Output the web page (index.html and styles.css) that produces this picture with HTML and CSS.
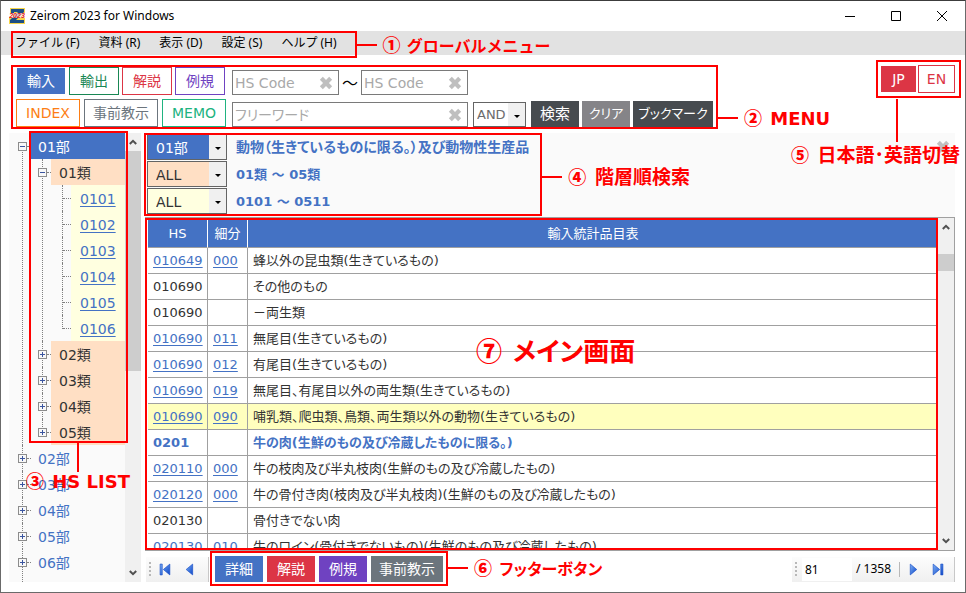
FILE: index.html
```html
<!DOCTYPE html>
<html lang="ja">
<head>
<meta charset="utf-8">
<title>Zeirom 2023 for Windows</title>
<link rel="stylesheet" href="styles.css">
</head>
<body>
<svg class="defs" aria-hidden="true">
  <symbol id="x" viewBox="0 0 12 12"><path d="M2 2l8 8M10 2l-8 8" stroke="currentColor" stroke-width="3.6" fill="none"/></symbol>
  <symbol id="up" viewBox="0 0 8 6"><path d="M.8 5L4 1.8 7.200 5" stroke="#505050" stroke-width="2" fill="none"/></symbol>
  <symbol id="down" viewBox="0 0 8 6"><path d="M.8 1L4 4.200 7.200 1" stroke="#505050" stroke-width="2" fill="none"/></symbol>
  <linearGradient id="blue" x1="0" x2="1" y1="0" y2="1"><stop offset="0" stop-color="#7db0f5"/><stop offset="1" stop-color="#0b45c8"/></linearGradient>
</svg>
<div class="window">
  <header class="titlebar">
    <svg class="logo" viewBox="0 0 16 16" aria-hidden="true">
      <path d="M1 0h15v5l-2 2v2h2v7H0V10h2L3 6H1z" fill="#f6d54a"/>
      <path d="M2 1h13v3L7 12h8v3H1v-3l8-8H5v2H2z" fill="#1d4f86"/>
      <path d="M0 5h16v5H0z" fill="#fff" opacity=".75"/>
      <text x="8" y="10" text-anchor="middle">2023</text>
    </svg>
    <h1>Zeirom 2023 for Windows</h1>
    <div class="window-buttons">
      <button type="button" aria-label="最小化"><svg viewBox="0 0 10 10"><path d="M0 5.500h10"/></svg></button>
      <button type="button" aria-label="最大化"><svg viewBox="0 0 10 10"><path d="M.5.5h9v9h-9z"/></svg></button>
      <button type="button" aria-label="閉じる"><svg viewBox="0 0 10 10"><path d="M0 0l10 10M10 0L0 10"/></svg></button>
    </div>
  </header>

  <div class="menubar">
    <nav class="menu marked">
      <button type="button">ファイル (F)</button>
      <button type="button">資料 (R)</button>
      <button type="button">表示 (D)</button>
      <button type="button">設定 (S)</button>
      <button type="button">ヘルプ (H)</button>
      <div class="frame"></div>
      <div class="callout side kana"><b>①</b> グローバルメニュー</div>
    </nav>
  </div>

  <div class="tools">
    <div class="search marked">
      <div class="modes">
        <div class="line">
          <button type="button" class="btn solid-blue">輸入</button>
          <button type="button" class="btn green">輸出</button>
          <button type="button" class="btn red">解説</button>
          <button type="button" class="btn purple">例規</button>
        </div>
        <div class="line">
          <button type="button" class="btn wide orange">INDEX</button>
          <button type="button" class="btn wider gray">事前教示</button>
          <button type="button" class="btn wide teal">MEMO</button>
        </div>
      </div>
      <form class="fields">
        <div class="line range">
          <div class="field"><input type="text" placeholder="HS Code" aria-label="HS Code 開始"><button type="button" aria-label="消去"><svg><use href="#x"/></svg></button></div>
          <span class="tilde">～</span>
          <div class="field"><input type="text" placeholder="HS Code" aria-label="HS Code 終了"><button type="button" aria-label="消去"><svg><use href="#x"/></svg></button></div>
        </div>
        <div class="line">
          <div class="field free"><input type="text" placeholder="フリーワード" aria-label="フリーワード"><button type="button" aria-label="消去"><svg><use href="#x"/></svg></button></div>
          <div class="pick and"><select aria-label="条件"><option>AND</option><option>OR</option></select></div>
          <div class="actions">
            <button type="submit" class="act">検索</button>
            <button type="reset" class="act light">クリア</button>
            <button type="button" class="act long">ブックマーク</button>
          </div>
        </div>
      </form>
      <div class="frame"></div>
      <div class="callout side"><b>②</b> MENU</div>
    </div>
    <div class="language marked">
      <button type="button" class="btn solid-red">JP</button>
      <button type="button" class="btn red">EN</button>
      <div class="frame"></div>
      <div class="callout below kanji"><b>⑤</b> 日本語･英語切替</div>
    </div>
  </div>

  <div class="work">
    <aside class="sidebar">
      <ul class="tree">
        <li class="part open marked">
          <div class="node"><button type="button" class="toggle minus" aria-label="閉じる"></button><span class="label current">01部</span></div>
          <ul>
            <li class="chapter open">
              <div class="node"><button type="button" class="toggle minus" aria-label="閉じる"></button><span class="label">01類</span></div>
              <ul>
                <li class="heading"><a href="#h0101">0101</a></li>
                <li class="heading"><a href="#h0102">0102</a></li>
                <li class="heading"><a href="#h0103">0103</a></li>
                <li class="heading"><a href="#h0104">0104</a></li>
                <li class="heading"><a href="#h0105">0105</a></li>
                <li class="heading"><a href="#h0106">0106</a></li>
              </ul>
            </li>
            <li class="chapter"><div class="node"><button type="button" class="toggle" aria-label="開く"></button><span class="label">02類</span></div></li>
            <li class="chapter"><div class="node"><button type="button" class="toggle" aria-label="開く"></button><span class="label">03類</span></div></li>
            <li class="chapter"><div class="node"><button type="button" class="toggle" aria-label="開く"></button><span class="label">04類</span></div></li>
            <li class="chapter"><div class="node"><button type="button" class="toggle" aria-label="開く"></button><span class="label">05類</span></div></li>
          </ul>
          <div class="frame"></div>
          <div class="callout below"><b>③</b> HS LIST</div>
        </li>
        <li class="part"><div class="node"><button type="button" class="toggle" aria-label="開く"></button><span class="label">02部</span></div></li>
        <li class="part"><div class="node"><button type="button" class="toggle" aria-label="開く"></button><span class="label">03部</span></div></li>
        <li class="part"><div class="node"><button type="button" class="toggle" aria-label="開く"></button><span class="label">04部</span></div></li>
        <li class="part"><div class="node"><button type="button" class="toggle" aria-label="開く"></button><span class="label">05部</span></div></li>
        <li class="part"><div class="node"><button type="button" class="toggle" aria-label="開く"></button><span class="label">06部</span></div></li>
      </ul>
      <div class="scrollbar"><svg><use href="#up"/></svg><div class="track"><div class="thumb"></div></div><svg><use href="#down"/></svg></div>
    </aside>

    <main class="content">
      <section class="levels">
        <div class="level-list marked">
          <div class="level"><div class="pick blue"><select aria-label="部"><option>01部</option></select></div><span class="name">動物（生きているものに限る。）及び動物性生産品</span></div>
          <div class="level"><div class="pick peach"><select aria-label="類"><option>ALL</option></select></div><span>01類 ～ 05類</span></div>
          <div class="level"><div class="pick cream"><select aria-label="項"><option>ALL</option></select></div><span>0101 ～ 0511</span></div>
          <div class="frame"></div>
          <div class="callout side kanji"><b>④</b> 階層順検索</div>
        </div>
        <button type="button" class="dismiss" aria-label="閉じる"><svg><use href="#x"/></svg></button>
      </section>

      <section class="grid marked">
        <div class="viewport">
          <table>
            <colgroup><col class="c-hs"><col class="c-sub"><col></colgroup>
            <thead><tr><th>HS</th><th>細分</th><th>輸入統計品目表</th></tr></thead>
            <tbody>
              <tr><td><a href="#r1">010649</a></td><td><a href="#r1">000</a></td><td>蜂以外の昆虫類(生きているもの)</td></tr>
              <tr><td>010690</td><td></td><td>その他のもの</td></tr>
              <tr><td>010690</td><td></td><td>－両生類</td></tr>
              <tr><td><a href="#r4">010690</a></td><td><a href="#r4">011</a></td><td>無尾目(生きているもの)</td></tr>
              <tr><td><a href="#r5">010690</a></td><td><a href="#r5">012</a></td><td>有尾目(生きているもの)</td></tr>
              <tr><td><a href="#r6">010690</a></td><td><a href="#r6">019</a></td><td>無尾目、有尾目以外の両生類(生きているもの)</td></tr>
              <tr class="selected"><td><a href="#r7">010690</a></td><td><a href="#r7">090</a></td><td>哺乳類、爬虫類、鳥類、両生類以外の動物(生きているもの)</td></tr>
              <tr class="group"><td>0201</td><td></td><td>牛の肉(生鮮のもの及び冷蔵したものに限る。)</td></tr>
              <tr><td><a href="#r9">020110</a></td><td><a href="#r9">000</a></td><td>牛の枝肉及び半丸枝肉(生鮮のもの及び冷蔵したもの)</td></tr>
              <tr><td><a href="#r10">020120</a></td><td><a href="#r10">000</a></td><td>牛の骨付き肉(枝肉及び半丸枝肉)(生鮮のもの及び冷蔵したもの)</td></tr>
              <tr><td>020130</td><td></td><td>骨付きでない肉</td></tr>
              <tr><td><a href="#r12">020130</a></td><td><a href="#r12">010</a></td><td>牛のロイン(骨付きでないもの)(生鮮のもの及び冷蔵したもの)</td></tr>
            </tbody>
          </table>
        </div>
        <div class="scrollbar"><svg><use href="#up"/></svg><div class="track"><div class="thumb"></div></div><svg><use href="#down"/></svg></div>
        <div class="frame"></div>
        <div class="callout center"><b>⑦</b> メイン画面</div>
      </section>

      <footer class="bottom">
        <div class="pager left">
          <i class="grip"></i>
          <button type="button" aria-label="最初"><svg viewBox="0 0 12 12"><path d="M1 1h2v10H1zM10 1v10L4 6z" fill="url(#blue)" stroke="#1c50c8" stroke-width=".6"/></svg></button>
          <button type="button" aria-label="前へ"><svg viewBox="0 0 12 12"><path d="M8 1v10L2 6z" fill="url(#blue)" stroke="#1c50c8" stroke-width=".6"/></svg></button>
        </div>
        <div class="footer-buttons marked">
          <button type="button" class="btn solid-blue">詳細</button>
          <button type="button" class="btn solid-red">解説</button>
          <button type="button" class="btn solid-purple">例規</button>
          <button type="button" class="btn solid-gray wider">事前教示</button>
          <div class="frame"></div>
          <div class="callout side kana"><b>⑥</b> フッターボタン</div>
        </div>
        <div class="pager right">
          <i class="grip"></i>
          <input type="text" value="81" aria-label="ページ">
          <span class="total">/ 1358</span>
          <i class="divider"></i>
          <button type="button" aria-label="次へ"><svg viewBox="0 0 12 12"><path d="M3 1v10l6-5z" fill="url(#blue)" stroke="#1c50c8" stroke-width=".6"/></svg></button>
          <button type="button" aria-label="最後"><svg viewBox="0 0 12 12"><path d="M9 1h2v10H9zM2 1v10l6-5z" fill="url(#blue)" stroke="#1c50c8" stroke-width=".6"/></svg></button>
        </div>
      </footer>
    </main>
  </div>
</div>
</body>
</html>
```
FILE: styles.css
```css
:root {
  --blue: #4472c4;
  --crimson: #dc3545;
  --purple: #6f42c1;
  --gray: #6c757d;
  --line: #a0a0a0;
  --mark: #f00;
}

* { box-sizing: border-box; }

body {
  margin: 0;
  font: 14px/20px "DejaVu Sans", "Noto Sans CJK JP", sans-serif;
  font-feature-settings: "palt";
  color: #333;
  background: #fff;
}

button, input, select {
  font: inherit;
  font-feature-settings: inherit;
  color: inherit;
  margin: 0;
  padding: 0;
  border: 0;
  border-radius: 0;
  background: none;
  white-space: nowrap;
}

ul { list-style: none; margin: 0; padding: 0; }
a { color: var(--blue); text-underline-offset: 2px; }
.defs { position: absolute; width: 0; height: 0; }

.window {
  display: flex;
  flex-direction: column;
  min-height: 100vh;
  border: 1px solid #6a6a6a;
  border-top-color: #3c3c3c;
}

/* Title bar */
.titlebar {
  display: flex;
  align-items: center;
  height: 30px;
  padding-left: 8px;
  gap: 5px;
  color: #000;
}
.logo { width: 16px; height: 16px; }
.logo text { font: italic bold 7px "Liberation Sans", sans-serif; fill: #e01818; }
.titlebar h1 { margin: 0; font: 12px/20px "Noto Sans", "Noto Sans CJK JP", sans-serif; }
.window-buttons { display: flex; margin-left: auto; }
.window-buttons button { width: 46px; height: 30px; }
.window-buttons svg { width: 10px; height: 10px; fill: none; stroke: #000; }

/* Menu bar */
.menubar { display: flex; height: 24px; background: #e2e2e2; padding-left: 14px; }
.menu { display: flex; gap: 19px; padding-right: 20px; font: 12px/24px "Noto Sans", "Noto Sans CJK JP", sans-serif; color: #000; }

/* Search tools */
.tools { display: flex; justify-content: space-between; align-items: flex-start; padding: 12px 10px 4px 15px; }
.search { display: flex; gap: 6px; }
.modes, .fields { display: flex; flex-direction: column; gap: 4px; }
.line { display: flex; gap: 3px; height: 28px; align-items: stretch; }
.modes .line + .line { gap: 4px; }
.fields .line { align-items: flex-end; gap: 5px; }
.btn { width: 50px; height: 28px; border: 1px solid currentColor; text-align: center; }
.wide { width: 64px; }
.wider { width: 74px; }
.green { color: #198754; }
.red { color: var(--crimson); }
.purple { color: var(--purple); }
.orange { color: #fd7e14; }
.gray { color: var(--gray); }
.teal { color: #20b380; }
.solid-blue, .solid-red, .solid-purple, .solid-gray { color: #fff; border-color: #fff; background-clip: padding-box; }
.solid-blue { background-color: var(--blue); }
.solid-red { background-color: var(--crimson); }
.solid-purple { background-color: var(--purple); }
.solid-gray { background-color: var(--gray); }

.field { display: flex; align-items: center; width: 107px; height: 25px; border: 1px solid #7a7a7a; padding: 0 5px 0 2px; }
.free { width: 236px; }
.field input { flex: 1; min-width: 0; height: 23px; outline: 0; }
.field input::placeholder { color: #a9a9a9; opacity: 1; }
.field button, .dismiss { display: flex; color: #bfbfbf; }
.field svg, .dismiss svg { width: 14px; height: 14px; }
.fields .range { gap: 3px; }
.tilde { width: 16px; color: #000; line-height: 25px; font-family: "Noto Sans CJK JP", sans-serif; font-size: 16px; }

.pick { position: relative; height: 26px; border: 1px solid #646464; }
.pick select { width: 100%; height: 100%; padding-left: 8px; appearance: none; outline: 0; background: linear-gradient(#f0f0f0, #f0f0f0) right / 17px 100% no-repeat; }
.pick::after { content: ""; position: absolute; right: 5px; top: 12px; border: 3px solid transparent; border-top-color: #000; border-bottom: 0; pointer-events: none; }
.and { width: 53px; height: 25px; font-size: 13px; color: #6c6c6c; }
.and select { padding-left: 3px; }
.actions { display: flex; gap: 3px; }
.act { width: 48px; height: 26px; background: #474b4f; color: #fff; font-size: 15px; }
.act.light { background: #858488; font-size: 13px; }
.act.long { width: 80px; font-size: 13px; }

.language { display: flex; gap: 1px; margin-top: -2px; }
.language .btn { width: 37px; }

/* Work area */
.work { flex: 1; display: flex; gap: 4px; padding: 2px 10px 10px 8px; }
.sidebar { display: flex; width: 132px; background: #fafafa; }

.scrollbar { display: flex; flex-direction: column; align-items: center; width: 16px; padding: 6px 0; gap: 6px; background: #f0f0f0; }
.scrollbar svg { width: 8px; height: 6px; }
.scrollbar .track { flex: 1; width: 100%; }
.scrollbar .thumb { background: #cdcdcd; }
.sidebar .thumb { height: 220px; }
.grid .thumb { height: 17px; margin-top: 18px; }

/* Tree */
.tree { flex: 1; padding-left: 8px; }
.tree ul { padding-left: 20px; }
.tree li { position: relative; }
.node { display: flex; align-items: center; height: 26px; }
.node::after { content: ""; order: 1; width: 4px; border-top: 1px dotted #808080; }
.label { order: 2; flex: 1; align-self: stretch; padding-left: 7px; line-height: 28px; color: var(--blue); }
.label.current { background: var(--blue); color: #fff; }
.chapter > .node > .label { padding-left: 8px; background: #ffdfc4; color: #333; }
.toggle { position: relative; z-index: 1; width: 9px; height: 9px; margin: 1px 0 0 1px; border: 1px solid #8c8c8c; background: linear-gradient(#3a559f, #3a559f) center / 5px 1px no-repeat, linear-gradient(#3a559f, #3a559f) center / 1px 5px no-repeat, #f8f8f8; }
.toggle.minus { background: linear-gradient(#3a559f, #3a559f) center / 5px 1px no-repeat, #f8f8f8; }
.part::before, .chapter::before, .heading::before { content: ""; position: absolute; left: 5px; top: 0; bottom: 0; border-left: 1px dotted #808080; }
.part:first-child::before { top: 14px; }
.part:last-child::before { bottom: -7px; }
.chapter:last-child::before { bottom: 12px; }
.heading { display: flex; align-items: center; height: 26px; padding-left: 6px; }
.heading::after { content: ""; order: -1; width: 8px; border-top: 1px dotted #808080; }
.heading:last-child::before { bottom: 12px; }
.heading a { flex: 1; height: 26px; padding-left: 9px; line-height: 29px; background: #ffffe0; }

/* Level selectors */
.content { flex: 1; min-width: 0; display: flex; flex-direction: column; }
.levels { display: flex; justify-content: space-between; align-items: flex-start; padding: 1px 5px 2px 2px; background: #fafafa; }
.level { display: flex; gap: 9px; height: 27px; color: var(--blue); font-weight: bold; font-size: 13px; line-height: 27px; }
.level .name { font-size: 14px; }
.level .pick { width: 80px; font-size: 14px; font-weight: normal; color: #333; }
.level .blue select { background-color: var(--blue); color: #fff; }
.level .peach select { background-color: #ffdfc4; }
.level .cream select { background-color: #ffffe0; }
.dismiss { margin-top: 6px; }

/* Item table */
.grid { display: flex; border: 1px solid var(--line); height: 334px; }
.viewport { flex: 1; overflow: hidden; padding: 2px 0 0 2px; }
table { width: 100%; table-layout: fixed; border-collapse: separate; border-spacing: 0; font-size: 13px; }
.c-hs { width: 60px; }
.c-sub { width: 40px; }
th, td { height: 26px; padding: 0 5px; border: solid var(--line); border-width: 0 1px 1px 0; line-height: 20px; white-space: nowrap; overflow: hidden; }
th { height: 28px; padding: 0; background: var(--blue); color: #fff; font-weight: normal; border-right-color: #fff; }
th:last-child, td:last-child { border-right: 0; }
.selected td { background: #ffffbe; }
.group td { font-weight: bold; color: var(--blue); }

/* Footer */
.bottom { display: flex; align-items: center; padding-top: 5px; height: 31px; }
.pager { display: flex; align-items: center; height: 25px; background: linear-gradient(#fcfcfc, #f0f0f0); font: 12px/20px "Noto Sans", sans-serif; color: #000; }
.pager button { display: flex; }
.pager svg { width: 13px; height: 13px; }
.grip { width: 2px; height: 15px; background: repeating-linear-gradient(#b8b8b8 0 2px, transparent 2px 4px); }
.left { width: 63px; margin-left: 1px; padding-left: 3px; gap: 12px; border-right: 1px solid #c8c8c8; }
.left .grip { margin-right: -4px; }
.right { width: 163px; margin-left: auto; padding-left: 3px; border-right: 1px solid #c8c8c8; }
.right input { width: 50px; height: 23px; margin-left: 5px; padding-left: 3px; background: #fff; }
.total { margin: 0 8px 0 4px; }
.divider { width: 1px; height: 15px; background: #b8b8b8; }
.right button { margin-left: 7px; }
.right button + button { margin-left: 11px; }
.footer-buttons { display: flex; gap: 2px; margin-left: 5px; }

/* Red annotations over the window */
.marked { position: relative; }
.frame { position: absolute; z-index: 3; border: 2px solid var(--mark); pointer-events: none; }
.callout { position: absolute; z-index: 4; color: var(--mark); font-size: 18px; font-weight: bold; line-height: 22px; white-space: nowrap; }
.callout b { font-family: "Noto Sans CJK JP", sans-serif; font-size: 18px; margin-right: 2px; }
.callout.kana { font-size: 16px; }
.callout.kanji { font-size: 19px; }
.callout::before { content: ""; position: absolute; background: var(--mark); }
.side { left: 100%; padding-left: 26px; }
.side::before { left: 0; top: 11px; width: 20px; height: 2px; }

.menu .frame { inset: 0 0 -3px -4px; }
.menu .side { top: 2px; }
.search .frame { inset: -2px -5px -2px -5px; }
.search .side { top: 39px; margin-left: 5px; }
.language .frame { inset: -5px -6px -5px -4px; }
.language .below { right: -5px; top: 78px; }
.language .below::before { right: 62px; bottom: 24px; width: 2px; height: 43px; }
.part .frame { inset: -2px -3px 2px 12px; }
.part .below { left: 9px; top: 336px; }
.part .below::before { left: 51px; top: -26px; width: 2px; height: 29px; }
.level-list .frame { inset: -1px -13px -1px -3px; }
.level-list .side { top: 31px; margin-left: 13px; }
.grid .frame { inset: 0 16px 0 -1px; }
.callout.center { left: 330px; top: 114px; font-size: 26px; line-height: 36px; }
.center b { font-size: 26px; }
.center::before { display: none; }
.footer-buttons .frame { inset: -4px -4px -3px -4px; }
.footer-buttons .side { top: 1px; margin-left: 4px; }
```
